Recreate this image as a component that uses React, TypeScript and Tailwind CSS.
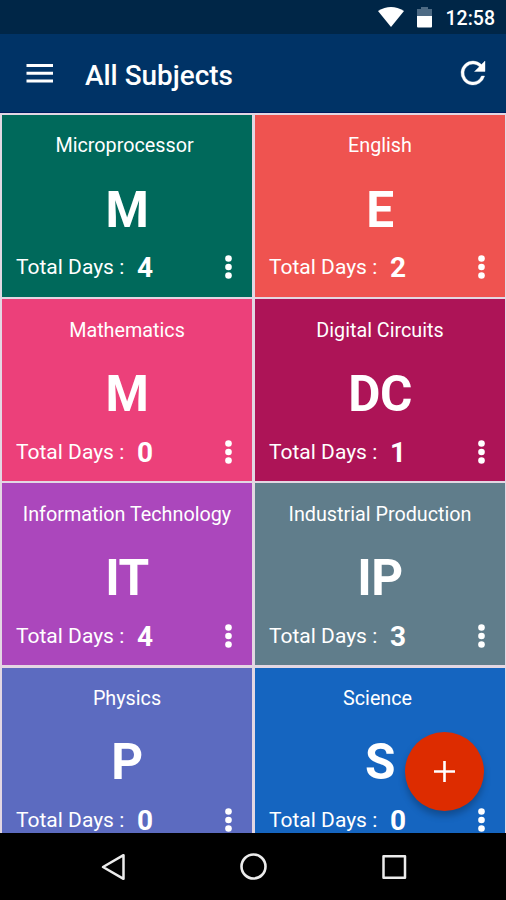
type Subject = { name: string; initials: string; days: number; color: string };

const subjects: Subject[] = [
  { name: "Microprocessor ", initials: "M", days: 4, color: "bg-[#00695b]" },
  { name: "English", initials: "E", days: 2, color: "bg-[#ef5350]" },
  { name: "Mathematics", initials: "M", days: 0, color: "bg-[#ec407a]" },
  { name: "Digital Circuits", initials: "DC", days: 1, color: "bg-[#ad1457]" },
  { name: "Information Technology", initials: "IT", days: 4, color: "bg-[#ab47bc]" },
  { name: "Industrial Production", initials: "IP", days: 3, color: "bg-[#607d8b]" },
  { name: "Physics", initials: "P", days: 0, color: "bg-[#5c6bc0]" },
  { name: "Science ", initials: "S", days: 0, color: "bg-[#1565c0]" },
];

function StatusBar() {
  return (
    <div className="flex h-[34px] shrink-0 items-center justify-end bg-[#002647] pr-[11px] text-white">
      <svg width="26" height="20" viewBox="0 0 26 20" className="mr-[13px]">
        <path d="M0 4Q13-4 26 4L13 20Z" fill="currentColor" />
      </svg>
      <svg width="15" height="22" viewBox="0 0 15 22" className="mr-[14px]">
        <path d="M4 1h7v2h4v7H0V3h4z" fill="#4d6a84" />
        <path d="M0 10h15v10.500q0 1-1 1H1q-1 0-1-1z" fill="currentColor" />
      </svg>
      <span className="pt-[3px] text-[19.500px] leading-none font-medium">12:58</span>
    </div>
  );
}

function AppBar() {
  return (
    <header className="flex h-[79px] shrink-0 items-center border-b border-[#001a60] bg-[#003366] pr-[15px] pl-[26px] text-white">
      <svg width="27" height="20" viewBox="0 0 27 20">
        <path d="M.500 2.500h26.500M.500 10.300h26.500M.500 18.100h26.500" stroke="currentColor" strokeWidth="3" />
      </svg>
      <h1 className="ml-[32px] flex-1 pt-[6px] text-[27.900px] leading-none font-medium">All Subjects</h1>
      <svg width="36" height="36" viewBox="0 0 24 24" fill="currentColor" stroke="currentColor" strokeWidth=".25">
        <path d="M17.650 6.350A7.960 7.960 0 0 0 12 4a8 8 0 1 0 7.730 10h-2.080A6 6 0 1 1 12 6c1.660 0 3.140.690 4.220 1.780L13 11h7V4z" />
      </svg>
    </header>
  );
}

function SubjectCard({ subject }: { subject: Subject }) {
  return (
    <div className={`flex h-[182px] flex-col text-white ${subject.color}`}>
      <div className="mt-[19.6px] h-[24px] text-center text-[19.750px] leading-[24px] whitespace-pre">{subject.name}</div>
      <div className="mt-[21.15px] h-[60px] text-center text-[49.500px] leading-[60px] font-bold tracking-[-0.5px]">{subject.initials}</div>
      <div className="mt-[11.75px] flex h-[32px] items-center pr-[20px] pl-[14px]">
        <span className="w-[121px] text-[21px] leading-[32px] whitespace-nowrap">Total Days :</span>
        <span className="flex-1 pt-[2px] text-[28px] leading-[32px] font-bold">{subject.days}</span>
        <svg width="7" height="24" viewBox="0 0 7 24" fill="currentColor">
          <circle cx="3.500" cy="3.500" r="3.300" />
          <circle cx="3.500" cy="12" r="3.300" />
          <circle cx="3.500" cy="20.500" r="3.300" />
        </svg>
      </div>
    </div>
  );
}

function NavigationBar() {
  return (
    <nav className="flex h-[67px] shrink-0 items-center justify-between bg-black pr-[99px] pl-[100px] text-[#ececec]">
      <svg width="26" height="28" viewBox="0 0 26 28" fill="none" stroke="currentColor" strokeWidth="2.500" strokeLinejoin="round">
        <path d="M23.500 2.200v23.600L3 14z" />
      </svg>
      <svg width="28" height="28" viewBox="0 0 28 28" fill="none" stroke="currentColor" strokeWidth="2.600">
        <circle cx="13.500" cy="13.500" r="12" />
      </svg>
      <svg width="25" height="26" viewBox="0 0 25 26" fill="none" stroke="currentColor" strokeWidth="2.500" strokeLinejoin="round">
        <rect x="1.500" y="2.300" width="21.500" height="21.500" />
      </svg>
    </nav>
  );
}

export default function App() {
  return (
    <div className="relative flex h-[900px] w-[506px] flex-col overflow-hidden bg-black font-['Roboto',sans-serif]">
      <StatusBar />
      <AppBar />
      <main className="h-[720px] shrink-0 overflow-hidden bg-[#e3d7e3] px-[2px] pt-[1.8px] pr-[1px]">
        <div className="grid grid-cols-2 gap-x-[3px] gap-y-[2.3px]">
          {subjects.map((subject) => (
            <SubjectCard key={subject.name} subject={subject} />
          ))}
        </div>
      </main>
      <NavigationBar />
      <button
        aria-label="Add subject"
        className="absolute top-[732px] left-[405px] flex size-[79px] items-center justify-center rounded-full bg-[#dd2c00] text-white shadow-[0_5px_7px_rgba(0,0,0,0.25)]"
      >
        <svg width="21" height="21" viewBox="0 0 21 21">
          <path d="M10.500 0v21M0 10.500h21" stroke="currentColor" strokeWidth="2.600" />
        </svg>
      </button>
    </div>
  );
}
